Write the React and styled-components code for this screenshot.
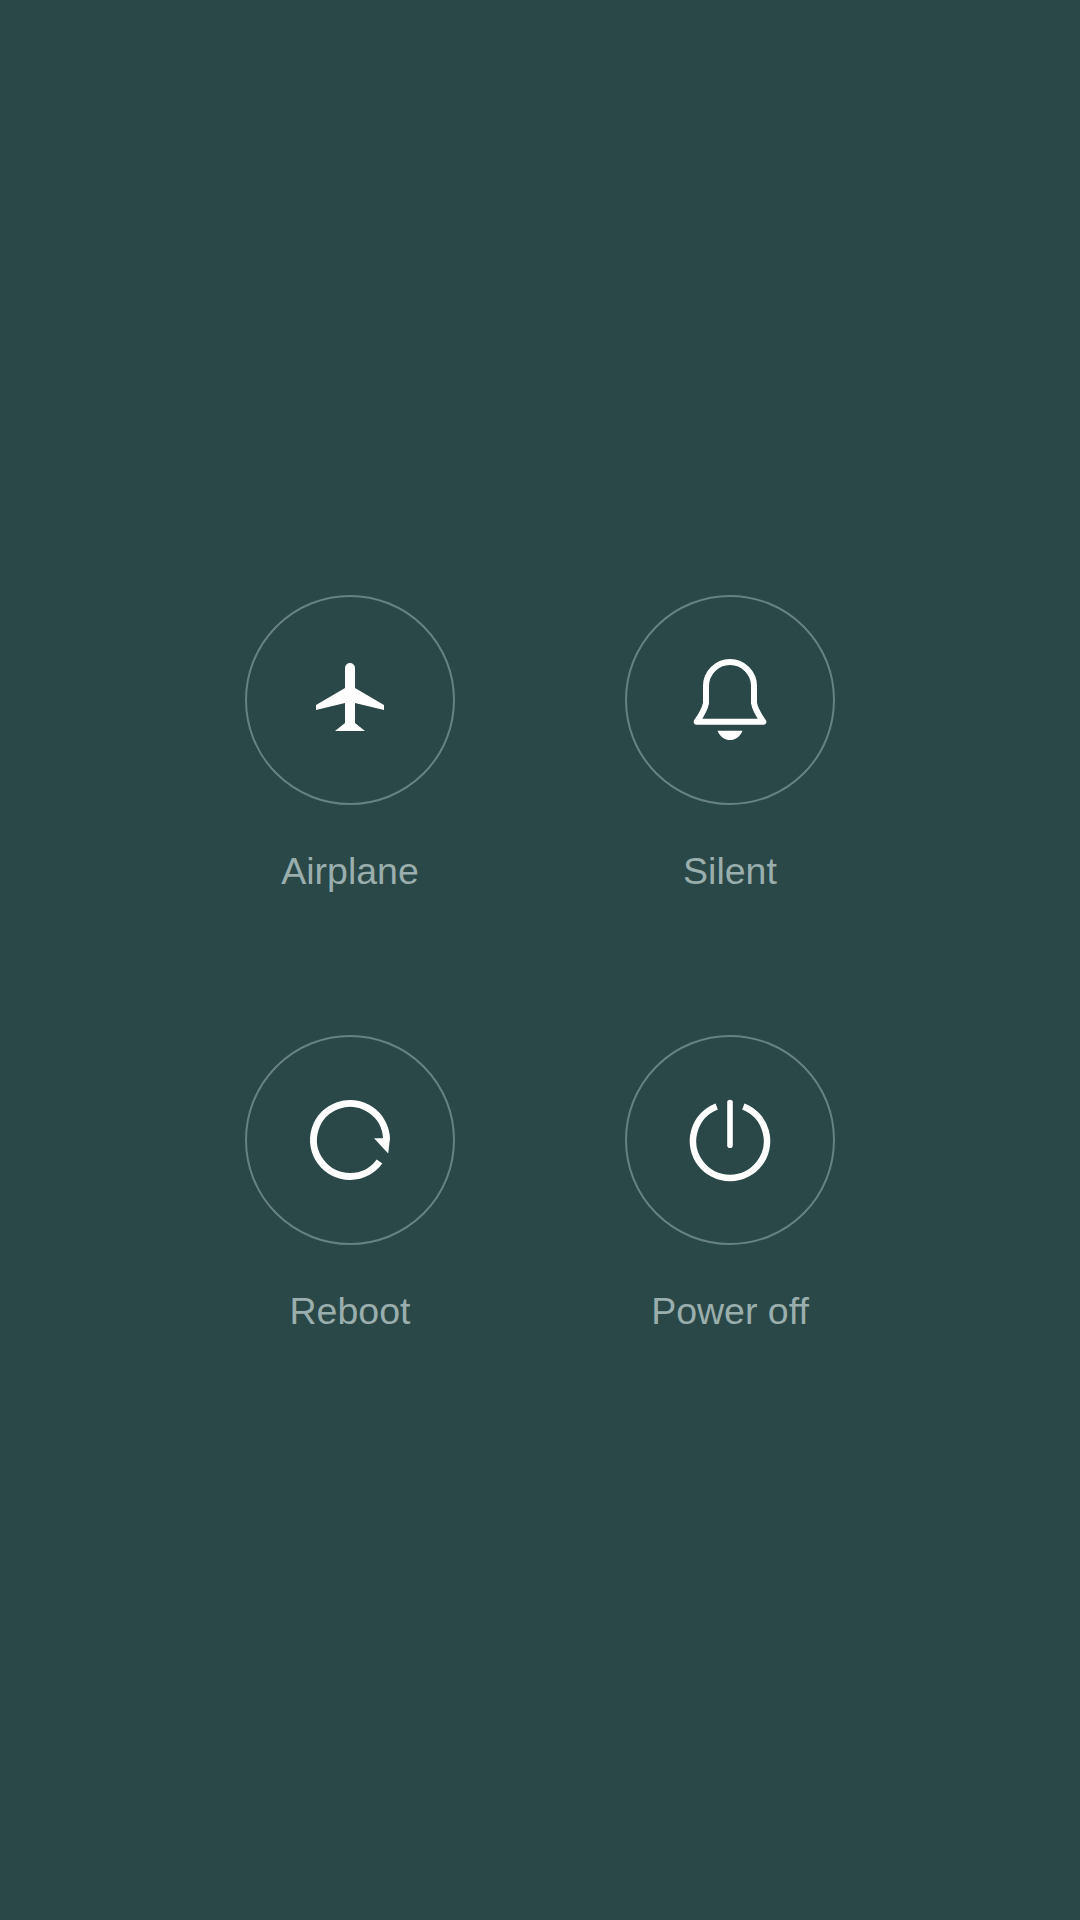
import React from 'react';
import styled, { createGlobalStyle } from 'styled-components';

const GlobalStyle = createGlobalStyle`
    html, body {
        margin: 0;
        padding: 0;
        background: #294847;
    }
`;

const Page = styled.div`
    width: 1080px;
    height: 1920px;
    box-sizing: border-box;
    padding-top: 595px;
    background: #294847;
    font-family: 'Liberation Sans', Arial, sans-serif;
`;
const ActionGrid = styled.div`
    display: grid;
    grid-template-columns: 210px 210px;
    justify-content: center;
    column-gap: 170px;
    row-gap: 142px;
`;
const ActionItem = styled.div`
    display: flex;
    flex-direction: column;
    align-items: center;
`;
const CircleButton = styled.button`
    display: flex;
    align-items: center;
    justify-content: center;
    width: 210px;
    height: 210px;
    box-sizing: border-box;
    padding: 0;
    border: 2px solid #688284;
    border-radius: 50%;
    background: transparent;
    cursor: pointer;
`;
const Label = styled.span`
    margin-top: 44px;
    font-size: 37.5px;
    line-height: 44px;
    color: #9aaead;
    white-space: nowrap;
`;
const IconSvg = styled.svg`
    display: block;
    width: 120px;
    height: 120px;
`;

const AirplaneIcon = () => (
    <IconSvg viewBox="-60 -60 120 120">
        <path
            fill="#fff"
            d="M-5 -32 A5 5 0 0 1 5 -32 L5 -12 L34 5 L34 10 L5 3 L5 23 L15 31 L-15 31 L-5 23 L-5 3 L-34 10 L-34 5 L-5 -12 Z"
        />
    </IconSvg>
);

const BellIcon = () => (
    <IconSvg viewBox="-60 -60 120 120">
        <path
            fill="none"
            stroke="#fff"
            strokeWidth="6"
            strokeLinejoin="round"
            d="M0 -38 A24 24 0 0 1 24 -14 L24 3 C25 9 30 17 33.3 21.7 L-33.3 21.7 C-30 17 -25 9 -24 3 L-24 -14 A24 24 0 0 1 0 -38 Z"
        />
        <path
            fill="#fff"
            d="M-12.5 30.7 L12.5 30.7 C10 37 5 40 0 40 C-5 40 -10 37 -12.5 30.7 Z"
        />
    </IconSvg>
);

const RebootIcon = () => (
    <IconSvg viewBox="-60 -60 120 120">
        <path
            fill="none"
            stroke="#fff"
            strokeWidth="7"
            d="M36.5 -1 A36.5 36.5 0 1 0 29.5 21.5"
        />
        <path fill="#fff" d="M24 -1.7 L40 -1.7 L38.2 13.5 Z" />
    </IconSvg>
);

const PowerIcon = () => (
    <IconSvg viewBox="-60 -60 120 120">
        <path
            fill="none"
            stroke="#fff"
            strokeWidth="6.6"
            d="M-13.3 -33 A37 37 0 1 0 13.3 -33"
            transform="translate(0 -0.5)"
        />
        <path
            fill="none"
            stroke="#fff"
            strokeWidth="5.6"
            strokeLinecap="round"
            d="M0 -37.5 L0 5.2"
        />
    </IconSvg>
);

const actions = [
    { id: 'airplane', label: 'Airplane', Icon: AirplaneIcon },
    { id: 'silent', label: 'Silent', Icon: BellIcon },
    { id: 'reboot', label: 'Reboot', Icon: RebootIcon },
    { id: 'power', label: 'Power off', Icon: PowerIcon },
];

const App = () => (
    <Page>
        <GlobalStyle />
        <ActionGrid>
            {actions.map(({ id, label, Icon }) => (
                <ActionItem key={id}>
                    <CircleButton aria-label={label}>
                        <Icon />
                    </CircleButton>
                    <Label>{label}</Label>
                </ActionItem>
            ))}
        </ActionGrid>
    </Page>
);

export default App;
